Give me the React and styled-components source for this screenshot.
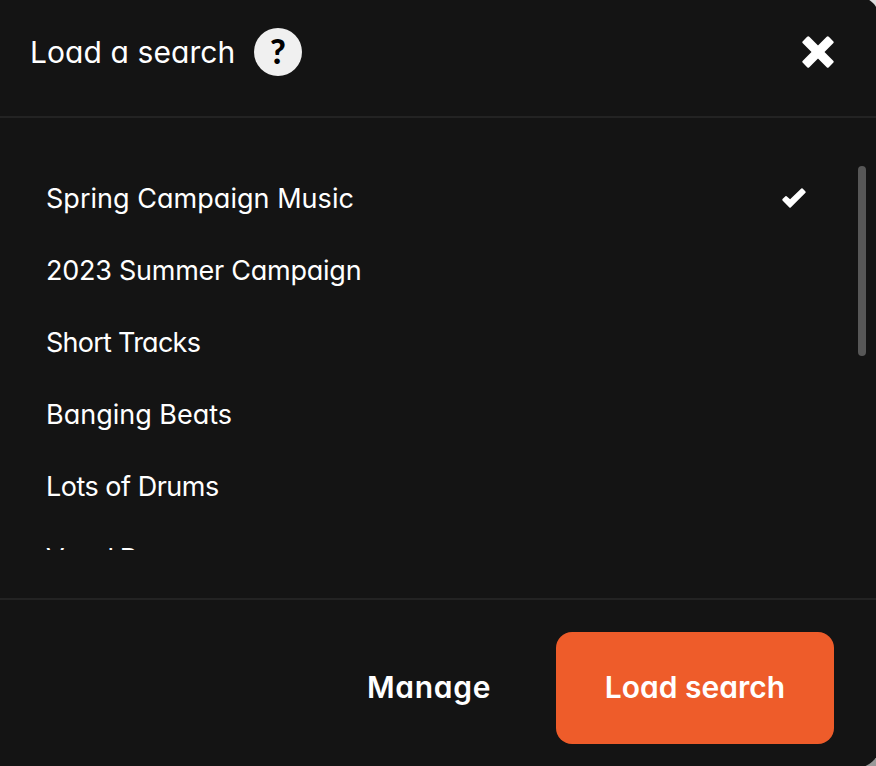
import React, { useState } from "react";
import styled, { createGlobalStyle } from "styled-components";

const GlobalStyle = createGlobalStyle`
  * {
    box-sizing: border-box;
  }

  body {
    margin: 0;
    font-family: Inter, Lato, sans-serif;
    font-feature-settings: "cv11";
    color: #ffffff;
  }
`;

const Page = styled.div`
  width: 876px;
  height: 766px;
  overflow: hidden;
  background: linear-gradient(#dcdcdc, #999999);
`;

const Modal = styled.div`
  display: flex;
  flex-direction: column;
  width: 880px;
  height: 772px;
  margin-top: -4px;
  padding: 4px 4px 0 0;
  background-color: #141414;
  border-radius: 0 24px 24px 0;
`;

const Header = styled.header`
  display: flex;
  align-items: center;
  height: 118px;
  padding: 0 42px 12px 30px;
  border-bottom: 2px solid #232323;
`;

const Title = styled.h1`
  margin: 0;
  padding-bottom: 1px;
  width: 224px;
  font-size: 30px;
  font-weight: 400;
  line-height: 38px;
  letter-spacing: 0.08px;
  white-space: nowrap;
`;

const HelpButton = styled.button`
  width: 48px;
  height: 48px;
  padding: 0 0 2px;
  border: 0;
  border-radius: 50%;
  background-color: #f0f0f0;
  color: #000000;
  font: 900 34px/46px Lato, sans-serif;
`;

const CloseButton = styled.button`
  display: flex;
  margin-left: auto;
  padding: 0;
  border: 0;
  background: none;
`;

const Body = styled.div`
  display: flex;
  height: 482px;
  padding: 48px 10px 48px 0;
  border-bottom: 2px solid #232323;
`;

const List = styled.ul`
  flex: 1;
  height: 384px;
  margin: 0;
  padding: 0;
  overflow: hidden;
  list-style: none;
`;

const Item = styled.li`
  display: flex;
  align-items: center;
  justify-content: space-between;
  height: 72px;
  padding: 0 52px 8px 46px;
  font-size: 27px;
  letter-spacing: ${(props) => props.$spacing || 0}px;
  white-space: nowrap;
`;

const Scrollbar = styled.div`
  width: 8px;
  height: 190px;
  border-radius: 4px;
  background-color: #575757;
`;

const Footer = styled.footer`
  display: flex;
  justify-content: flex-end;
  padding: 32px 42px 0 0;
`;

const Button = styled.button`
  width: ${(props) => (props.$primary ? 278 : 254)}px;
  height: 112px;
  padding: 0 0 2px;
  border: 0;
  border-radius: 16px;
  background-color: ${(props) => (props.$primary ? "#ee5c2a" : "transparent")};
  color: #ffffff;
  font-family: inherit;
  font-feature-settings: inherit;
  font-size: 30px;
  font-weight: 600;
  letter-spacing: ${(props) => (props.$primary ? 0 : 0.7)}px;
`;

const searches = [
  { name: "Spring Campaign Music", spacing: 0.03 },
  { name: "2023 Summer Campaign", spacing: -0.25 },
  { name: "Short Tracks", spacing: -0.75 },
  { name: "Banging Beats", spacing: 0 },
  { name: "Lots of Drums", spacing: -0.5 },
  { name: "Vocal Pop", spacing: -0.95 },
];

const CloseIcon = () => (
  <svg width="32" height="32" viewBox="0 0 32 32">
    <g fill="#ffffff">
      <rect
        x="-2.4"
        y="11.4"
        width="36.8"
        height="9.2"
        rx="1.5"
        transform="rotate(45 16 16)"
      />
      <rect
        x="-2.4"
        y="11.4"
        width="36.8"
        height="9.2"
        rx="1.5"
        transform="rotate(-45 16 16)"
      />
    </g>
  </svg>
);

const CheckIcon = () => (
  <svg width="24" height="20" viewBox="0 0 24 20">
    <path
      d="M.5 11.1 3.4 8.2Q4 7.7 4.6 8.2L8.1 11.2 19.3.5Q20 0 20.6.5L23.5 3.4Q24 4 23.5 4.7L8.7 19.5Q8 20 7.4 19.5L.5 12.6Q0 11.8.5 11.1Z"
      fill="#ffffff"
    />
  </svg>
);

function App() {
  const [selected, setSelected] = useState("Spring Campaign Music");

  return (
    <>
      <GlobalStyle />
      <Page>
        <Modal>
          <Header>
            <Title>Load a search</Title>
            <HelpButton>?</HelpButton>
            <CloseButton aria-label="Close">
              <CloseIcon />
            </CloseButton>
          </Header>
          <Body>
            <List>
              {searches.map((v) => (
                <Item
                  key={v.name}
                  $spacing={v.spacing}
                  onClick={() => setSelected(v.name)}
                >
                  <span>{v.name}</span>
                  {selected === v.name && <CheckIcon />}
                </Item>
              ))}
            </List>
            <Scrollbar />
          </Body>
          <Footer>
            <Button>Manage</Button>
            <Button $primary>Load search</Button>
          </Footer>
        </Modal>
      </Page>
    </>
  );
}

export default App;
